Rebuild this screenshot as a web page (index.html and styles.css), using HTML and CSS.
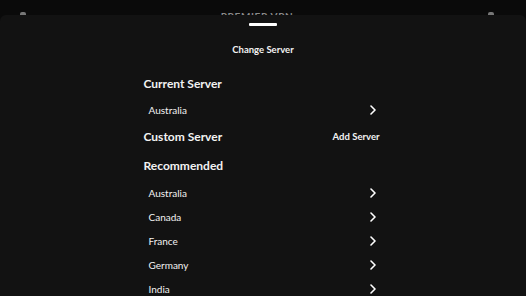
FILE: index.html
```html
<!DOCTYPE html>
<html>
<head>
<meta charset="utf-8">
<link rel="stylesheet" href="styles.css">
</head>
<body>
<div class="top">
  <span class="top-icon"></span>
  <span class="brand">PREMIER VPN</span>
  <span class="top-icon"></span>
</div>
<div class="sheet">
  <div class="handle"></div>
  <div class="title">Change Server</div>
  <div class="content">
    <div class="heading first">Current Server</div>
    <div class="row"><span>Australia</span><svg class="chev" viewBox="0 0 6 10"><path d="M1 1 L5 5 L1 9" /></svg></div>
    <div class="heading split"><span>Custom Server</span><span class="add">Add Server</span></div>
    <div class="heading rec">Recommended</div>
    <div class="row rec-first"><span>Australia</span><svg class="chev" viewBox="0 0 6 10"><path d="M1 1 L5 5 L1 9" /></svg></div>
    <div class="row"><span>Canada</span><svg class="chev" viewBox="0 0 6 10"><path d="M1 1 L5 5 L1 9" /></svg></div>
    <div class="row"><span>France</span><svg class="chev" viewBox="0 0 6 10"><path d="M1 1 L5 5 L1 9" /></svg></div>
    <div class="row"><span>Germany</span><svg class="chev" viewBox="0 0 6 10"><path d="M1 1 L5 5 L1 9" /></svg></div>
    <div class="row"><span>India</span><svg class="chev" viewBox="0 0 6 10"><path d="M1 1 L5 5 L1 9" /></svg></div>
  </div>
</div>
</body>
</html>
```
FILE: styles.css
```css
html, body {
  margin: 0;
  padding: 0;
  background: #0a0a0a;
  height: 296px;
  overflow: hidden;
  font-family: "Lato", "Noto Sans", sans-serif;
  color: #f2f2f2;
}
.top {
  height: 15px;
  overflow: hidden;
  display: flex;
  justify-content: space-between;
  align-items: flex-start;
  padding: 0 32px 0 20px;
  box-sizing: border-box;
}
.top-icon {
  width: 6px;
  height: 5px;
  margin-top: 12px;
  background: #777;
  border-radius: 2px 2px 0 0;
}
.brand {
  margin-top: 10px;
  font-size: 10px;
  font-weight: 700;
  letter-spacing: 0.6px;
  color: #8a8a8a;
  line-height: 12px;
}
.sheet {
  background: #121212;
  height: 281px;
  border-radius: 6px 6px 0 0;
  overflow: hidden;
  display: flex;
  flex-direction: column;
  align-items: center;
}
.handle {
  width: 28px;
  height: 3px;
  background: #fff;
  border-radius: 1px;
  margin-top: 8px;
  flex: none;
}
.title {
  margin-top: 14px;
  line-height: 20px;
  font-size: 9.5px;
  font-weight: 700;
}
.content {
  width: 237px;
  margin-left: -2px;
  display: flex;
  flex-direction: column;
}
.heading {
  line-height: 20px;
  font-size: 12px;
  font-weight: 700;
}
.heading.first { margin-top: 14px; }
.heading.split {
  margin-top: 5px;
  display: flex;
  justify-content: space-between;
  align-items: center;
}
.heading .add {
  font-size: 9.5px;
  font-weight: 700;
  margin-right: 1px;
}
.heading.rec { margin-top: 9px; }
.row {
  height: 24px;
  display: flex;
  justify-content: space-between;
  align-items: center;
  padding: 0 5px 0 5px;
  font-size: 10px;
  font-weight: 400;
}
.heading.first + .row { margin-top: 4px; }
.row.rec-first { margin-top: 5px; }
.chev {
  width: 6px;
  height: 10px;
  fill: none;
  stroke: #fff;
  stroke-width: 1.6;
  stroke-linecap: round;
  stroke-linejoin: round;
}
```
